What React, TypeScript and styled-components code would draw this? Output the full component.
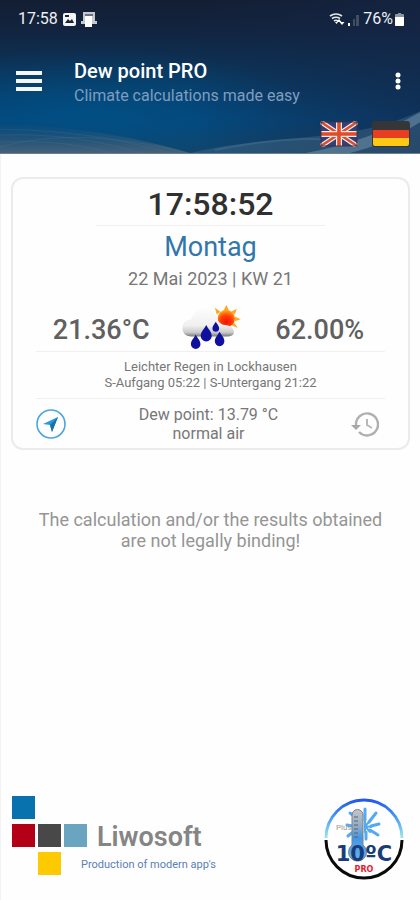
import React from "react";
import styled, { createGlobalStyle } from "styled-components";

const GlobalStyle = createGlobalStyle`
  * { box-sizing: border-box; }
  body {
    margin: 0;
    background: #fefefe;
    font-family: Roboto, "Liberation Sans", sans-serif;
  }
`;

const Page = styled.div`
  min-height: 100vh;
  display: flex;
  flex-direction: column;
  border-left: 1px solid #f3f3f6;
`;

const Header = styled.header`
  position: relative;
  isolation: isolate;
  margin-left: -1px;
  display: flex;
  flex-direction: column;
  color: #fff;
  background: #073a63;
  border-bottom: 1px solid #6d8090;
`;

const Backdrop = styled.svg`
  position: absolute;
  inset: 0;
  width: 100%;
  height: 100%;
  z-index: -1;
`;

const StatusBar = styled.div`
  display: flex;
  justify-content: space-between;
  padding: 8px 16px 0 18px;
  font-size: 16px;
  line-height: 22px;
  color: #eef0f3;
`;

const StatusGroup = styled.div<{ $gap: number }>`
  display: flex;
  align-items: center;
  gap: ${(p) => p.$gap}px;
`;

const TitleBar = styled.div`
  display: flex;
  align-items: center;
  padding: 24px 12px 0 16px;
`;

const Titles = styled.div`
  flex: 1;
  padding: 4px 0 0 32px;
`;

const Title = styled.h1`
  margin: 0;
  font-size: 20px;
  line-height: 26px;
  font-weight: 500;
`;

const Subtitle = styled.p`
  margin: 0;
  font-size: 16px;
  line-height: 23px;
  color: #7f9dbf;
`;

const IconButton = styled.button`
  display: flex;
  padding: 0;
  border: 0;
  background: none;
  color: inherit;
  cursor: pointer;
`;

const Languages = styled.div`
  display: flex;
  justify-content: flex-end;
  gap: 14px;
  padding: 14px 10px 6px;
`;

const Card = styled.section`
  margin: 23px 10px 0 10px;
  padding: 6px 23px 3px;
  border: 2px solid #ebebeb;
  border-radius: 12px;
  display: flex;
  flex-direction: column;
  text-align: center;
  color: #777;
`;

const Clock = styled.time`
  font-size: 32px;
  line-height: 38px;
  font-weight: 500;
  color: #303030;
`;

const Rule = styled.hr<{ $inset?: number }>`
  width: auto;
  height: 1px;
  margin: 2px ${(p) => p.$inset ?? 0}px;
  border: 0;
  background: #f0f0f0;
`;

const Weekday = styled.div`
  font-size: 27px;
  line-height: 38px;
  color: #2f77ad;
`;

const DateLine = styled.div`
  font-size: 18px;
  line-height: 26px;
`;

const Readings = styled.div`
  display: grid;
  grid-template-columns: 1fr 60px 1fr;
  column-gap: 14px;
  align-items: center;
  padding-top: 13px;
`;

const Reading = styled.div`
  padding-top: 6px;
  font-size: 27px;
  line-height: 36px;
  font-weight: 500;
  color: #606060;
`;

const Weather = styled.div`
  padding: 5px 0;
  font-size: 13px;
  line-height: 16px;
`;

const DewRow = styled.div`
  display: flex;
  align-items: center;
  justify-content: space-between;
  font-size: 16px;
  line-height: 19px;
  padding: 4px 6px 2px 0;
`;

const Notice = styled.p`
  margin: 59px 32px 0;
  font-size: 18px;
  line-height: 21px;
  text-align: center;
  color: #959595;
`;

const Footer = styled.footer`
  margin-top: auto;
  padding: 0 15px 20px 11px;
  display: flex;
  justify-content: space-between;
  align-items: flex-end;
`;

const Brand = styled.a`
  display: flex;
  align-items: flex-end;
  color: #858585;
  text-decoration: none;
`;

const Squares = styled.div`
  display: grid;
  grid-template-columns: repeat(3, 23px);
  grid-template-rows: repeat(3, 23px);
  gap: 5px 3px;
  padding-bottom: 5px;
`;

const Square = styled.span<{ $color: string; $col: number; $row: number }>`
  background: ${(p) => p.$color};
  grid-column: ${(p) => p.$col};
  grid-row: ${(p) => p.$row};
`;

const BrandText = styled.div`
  display: flex;
  flex-direction: column;
  margin-left: -6px;
  padding-bottom: 5px;
`;

const BrandName = styled.strong`
  padding-left: 16px;
  font-size: 27px;
  line-height: 36px;
  font-weight: 600;
`;

const Tagline = styled.span`
  font-size: 11px;
  line-height: 20px;
  color: #5a80b6;
`;

const squares = [
  { color: "#0872ae", col: 1, row: 1 },
  { color: "#b30016", col: 1, row: 2 },
  { color: "#484848", col: 2, row: 2 },
  { color: "#6aa5bf", col: 3, row: 2 },
  { color: "#fdc900", col: 2, row: 3 },
];

function HeaderBackdrop() {
  return (
    <Backdrop viewBox="0 0 420 154" preserveAspectRatio="none" aria-hidden="true">
      <defs>
        <linearGradient id="sky" x1="0" y1="0" x2="0" y2="1">
          <stop offset="0" stopColor="#131e33" />
          <stop offset="0.2" stopColor="#122440" />
          <stop offset="0.5" stopColor="#0b355b" />
          <stop offset="0.78" stopColor="#05467a" />
          <stop offset="1" stopColor="#164264" />
        </linearGradient>
        <radialGradient id="glow" cx="0.22" cy="0.7" r="0.55">
          <stop offset="0" stopColor="#005187" stopOpacity="0.8" />
          <stop offset="1" stopColor="#005187" stopOpacity="0" />
        </radialGradient>
        <linearGradient id="shade" x1="0" y1="0" x2="1" y2="0">
          <stop offset="0.45" stopColor="#152647" stopOpacity="0" />
          <stop offset="1" stopColor="#152647" stopOpacity="0.6" />
        </linearGradient>
        <linearGradient id="haze" x1="0" y1="0" x2="0" y2="1">
          <stop offset="0" stopColor="#285577" stopOpacity="0" />
          <stop offset="1" stopColor="#46627a" />
        </linearGradient>
      </defs>
      <rect width="420" height="154" fill="url(#sky)" />
      <rect y="30" width="420" height="124" fill="url(#glow)" />
      <rect width="420" height="154" fill="url(#shade)" />
      <path d="M0 124C55 127 116 132 190 154H0Z" fill="url(#haze)" />
      <g fill="none" stroke="#557790" strokeOpacity="0.25">
        <path d="M0 130C60 131 115 138 170 154" />
        <path d="M0 136C50 134 100 141 140 154" />
        <path d="M0 148C55 133 110 136 185 153" />
        <path d="M0 143C45 141 80 145 110 154" />
      </g>
      <path d="M190 154C280 133 350 145 420 112V154Z" fill="#4f7896" fillOpacity="0.35" />
      <path d="M306 154Q370 142 420 113V123Q385 146 350 154Z" fill="#7898ad" fillOpacity="0.5" />
      <path d="M215 151Q300 134 350 143" fill="none" stroke="#5d819b" strokeOpacity="0.3" strokeWidth="2" />
    </Backdrop>
  );
}

function PictureIcon() {
  return (
    <svg width="13" height="13" viewBox="0 0 13 13" aria-hidden="true">
      <rect width="13" height="13" rx="2" fill="#f5f5f5" />
      <path d="M2 10l3-4 2 2 2-2 2 4Z" fill="#17243a" />
      <path d="M2 2h4v2H2Z" fill="#17243a" />
    </svg>
  );
}

function DeviceIcon() {
  return (
    <svg width="16" height="16" viewBox="0 0 16 16" aria-hidden="true">
      <path d="M2 1h12v9h2v3H0v-3h2Z" fill="#c5c9cf" />
      <path d="M4 3h8v2H4Z" fill="#667080" />
      <path d="M4 5h7v11H4Z" fill="#fff" />
    </svg>
  );
}

function WifiIcon() {
  return (
    <svg width="16" height="14" viewBox="0 0 16 14" aria-hidden="true">
      <g fill="none" stroke="#e6e9ed" strokeWidth="1.6">
        <path d="M1 4Q7 0 13 4" />
        <path d="M3 6.5Q7 4 11 6.5" />
        <path d="M5 9Q7 7.5 9 9" />
      </g>
      <path d="M6 10h3l-1.5 2ZM10 7l2.500 3h-5ZM13 13l-2.500-3h5Z" fill="#fff" />
    </svg>
  );
}

function SignalIcon() {
  return (
    <svg width="14" height="13" viewBox="0 0 14 13" aria-hidden="true">
      <path d="M1 10h2v3H1Z" fill="#fff" />
      <path d="M6 6h2v7H6ZM9 2h3v11H9Z" fill="#424d60" />
    </svg>
  );
}

function BatteryIcon() {
  return (
    <svg width="9" height="13" viewBox="0 0 9 13" aria-hidden="true">
      <path d="M3 0h3v1h2q1 0 1 1v10q0 1-1 1H1q-1 0-1-1V2q0-1 1-1h2Z" fill="#8d949e" />
      <path d="M0 4h9v8q0 1-1 1H1q-1 0-1-1Z" fill="#fff" />
    </svg>
  );
}

function MenuIcon() {
  return (
    <svg width="26" height="20" viewBox="0 0 26 20" aria-hidden="true">
      <path d="M0 0h26v4H0ZM0 8h26v4H0ZM0 16h26v4H0Z" fill="#f4f6f8" />
    </svg>
  );
}

function MoreIcon() {
  return (
    <svg width="20" height="20" viewBox="0 0 20 20" aria-hidden="true" fill="#fff">
      <circle cx="10" cy="4" r="2.5" />
      <circle cx="10" cy="10" r="2.5" />
      <circle cx="10" cy="16" r="2.5" />
    </svg>
  );
}

function BritishFlag() {
  return (
    <svg width="38" height="26" viewBox="0 0 38 26" aria-hidden="true">
      <rect x="1" y="1" width="36" height="24" fill="#333f79" />
      <path d="M1 1l36 24M37 1L1 25" stroke="#f1e8e5" strokeWidth="5" />
      <path d="M1 1l36 24M37 1L1 25" stroke="#d94b2d" strokeWidth="2.4" />
      <path d="M19 1v24M1 13h36" stroke="#f5eae5" strokeWidth="6" />
      <path d="M19 1v24M1 13h36" stroke="#e14b27" strokeWidth="3.6" />
      <rect x="1" y="1" width="36" height="24" fill="none" stroke="#3d354c" />
    </svg>
  );
}

function GermanFlag() {
  return (
    <svg width="38" height="26" viewBox="0 0 38 26" aria-hidden="true">
      <rect width="38" height="26" rx="3" fill="#363638" />
      <path d="M1 9h36v8H1Z" fill="#e83d20" />
      <path d="M1 17h36v6q0 2-2 2H3q-2 0-2-2Z" fill="#fdc914" />
    </svg>
  );
}

function RainIcon() {
  const drop = "M0-8C2-4 5-2 5 2A5 5 0 0 1-5 2C-5-2-2-4 0-8Z";
  return (
    <svg width="60" height="44" viewBox="0 0 60 46" role="img" aria-label="Light rain">
      <defs>
        <linearGradient id="cloud" x1="0" y1="0" x2="0" y2="1">
          <stop offset="0" stopColor="#fcfcfc" />
          <stop offset="0.6" stopColor="#f0f0f0" />
          <stop offset="0.85" stopColor="#cacaca" />
          <stop offset="1" stopColor="#777" />
        </linearGradient>
        <radialGradient id="sun" cx="0.5" cy="0.7" r="0.65">
          <stop offset="0" stopColor="#f51105" />
          <stop offset="0.55" stopColor="#ff3d08" />
          <stop offset="1" stopColor="#ffa31b" />
        </radialGradient>
      </defs>
      <g fill="#ffa727">
        <path d="M43 6l3-6 3 6ZM51 7l6-3-2 6ZM55 12l6 3-6 2ZM54 18l4 6-7-3ZM40 7l-6-4 2 7Z" />
      </g>
      <circle cx="46" cy="14" r="9" fill="url(#sun)" />
      <path
        d="M9 33Q0 32 0 24Q0 16 9 15Q13 4 25 4Q35 6 37 16Q40 21 45 21Q54 22 54 29Q53 33 47 33Z"
        fill="url(#cloud)"
      />
      <g fill="#1010a0">
        <path transform="translate(14 39)" d={drop} />
        <path transform="translate(25 30) scale(1.15)" d={drop} />
        <path transform="translate(35 23) scale(.7)" d={drop} />
        <path transform="translate(39 36)" d={drop} />
      </g>
    </svg>
  );
}

function LocationIcon() {
  return (
    <svg width="30" height="32" viewBox="0 0 30 32" aria-hidden="true">
      <circle cx="15" cy="16" r="14" fill="none" stroke="#4ba5dc" strokeWidth="1.6" />
      <path d="M22 9L7 16l7 1 2 7Z" fill="#249bdc" />
      <path d="M22 9L14 17l2 7Z" fill="#1d6fa9" />
    </svg>
  );
}

function HistoryIcon() {
  return (
    <svg width="28" height="28" viewBox="1 1 28 28" aria-hidden="true">
      <path d="M6 16A11 11 0 1 1 9 23" fill="none" stroke="#b0b0b0" strokeWidth="2.4" />
      <path d="M1 16h10l-5 5Z" fill="#a8a8a8" />
      <path d="M17 10v6l5 3" fill="none" stroke="#b8b8b8" strokeWidth="2" />
    </svg>
  );
}

function AppBadge() {
  return (
    <svg width="82" height="82" viewBox="0 0 82 82" role="img" aria-label="10 ºC PRO">
      <defs>
        <linearGradient id="arc" x1="0" y1="0" x2="0" y2="1">
          <stop offset="0" stopColor="#2358ef" />
          <stop offset="0.45" stopColor="#439bf5" />
          <stop offset="1" stopColor="#a1e7ec" />
        </linearGradient>
        <linearGradient id="tube" x1="0" y1="0" x2="0" y2="1">
          <stop offset="0" stopColor="#c5c5c5" />
          <stop offset="0.35" stopColor="#8cabc8" />
          <stop offset="0.55" stopColor="#4396e5" />
          <stop offset="1" stopColor="#69b5f2" />
        </linearGradient>
      </defs>
      <circle cx="41" cy="41" r="38" fill="#fff" />
      <path d="M2 37A39 39 0 0 1 80 37" fill="none" stroke="url(#arc)" strokeWidth="3" transform="translate(1 4) scale(.975)" />
      <path d="M3 42A38 38 0 0 0 79 42" fill="none" stroke="#0a0a0a" strokeWidth="3" />
      <g stroke="#54a9f2" strokeWidth="3" strokeLinecap="round">
        <path d="M42 22V11M46 24l7-9M48 28l8-2M47 32l8 5M43 34v7M34 20l-7-5M29 28l-5-1M30 34l-5 4" />
        <path d="M42 28l5-5M42 28l6 1M42 28l5 6M42 28v-6M42 28v6" strokeWidth="2" />
      </g>
      <path d="M29 47V17a5 5 0 0 1 11 0v30a9 9 0 1 1-11 0Z" fill="url(#tube)" stroke="#77818b" />
      <path d="M31 19h4M31 23h4M31 27h4M31 31h4M31 35h4M31 39h4" stroke="#59636d" />
      <text x="13" y="32" fontFamily="Roboto, sans-serif" fontSize="8" fill="#999">
        Plus
      </text>
      <text
        x="41"
        y="63"
        textAnchor="middle"
        fontFamily="DejaVu Sans, sans-serif"
        fontSize="21"
        fontWeight="700"
        fill="#183d79"
      >
        10ºC
      </text>
      <text
        x="41"
        y="74"
        textAnchor="middle"
        fontFamily="DejaVu Sans, sans-serif"
        fontSize="8"
        fontWeight="700"
        fill="#e51b2c"
      >
        PRO
      </text>
    </svg>
  );
}

export default function App() {
  return (
    <Page>
      <GlobalStyle />
      <Header>
        <HeaderBackdrop />
        <StatusBar>
          <StatusGroup $gap={5}>
            <span>17:58</span>
            <PictureIcon />
            <DeviceIcon />
          </StatusGroup>
          <StatusGroup $gap={2}>
            <WifiIcon />
            <SignalIcon />
            <span>76%</span>
            <BatteryIcon />
          </StatusGroup>
        </StatusBar>
        <TitleBar>
          <IconButton aria-label="Open menu">
            <MenuIcon />
          </IconButton>
          <Titles>
            <Title>Dew point PRO</Title>
            <Subtitle>Climate calculations made easy</Subtitle>
          </Titles>
          <IconButton aria-label="More options">
            <MoreIcon />
          </IconButton>
        </TitleBar>
        <Languages>
          <IconButton aria-label="English">
            <BritishFlag />
          </IconButton>
          <IconButton aria-label="Deutsch">
            <GermanFlag />
          </IconButton>
        </Languages>
      </Header>
      <main>
        <Card>
          <Clock>17:58:52</Clock>
          <Rule $inset={60} />
          <Weekday>Montag</Weekday>
          <DateLine>22 Mai 2023 | KW 21</DateLine>
          <Readings>
            <Reading>21.36°C</Reading>
            <RainIcon />
            <Reading>62.00%</Reading>
          </Readings>
          <Rule />
          <Weather>
            <div>Leichter Regen in Lockhausen</div>
            <div>S-Aufgang 05:22 | S-Untergang 21:22</div>
          </Weather>
          <Rule />
          <DewRow>
            <IconButton aria-label="Use current location">
              <LocationIcon />
            </IconButton>
            <div>
              <div>Dew point: 13.79 °C</div>
              <div>normal air</div>
            </div>
            <IconButton aria-label="History">
              <HistoryIcon />
            </IconButton>
          </DewRow>
        </Card>
        <Notice>The calculation and/or the results obtained are not legally binding!</Notice>
      </main>
      <Footer>
        <Brand href="#liwosoft">
          <Squares>
            {squares.map((s) => (
              <Square key={s.color} $color={s.color} $col={s.col} $row={s.row} />
            ))}
          </Squares>
          <BrandText>
            <BrandName>Liwosoft</BrandName>
            <Tagline>Production of modern app's</Tagline>
          </BrandText>
        </Brand>
        <AppBadge />
      </Footer>
    </Page>
  );
}
